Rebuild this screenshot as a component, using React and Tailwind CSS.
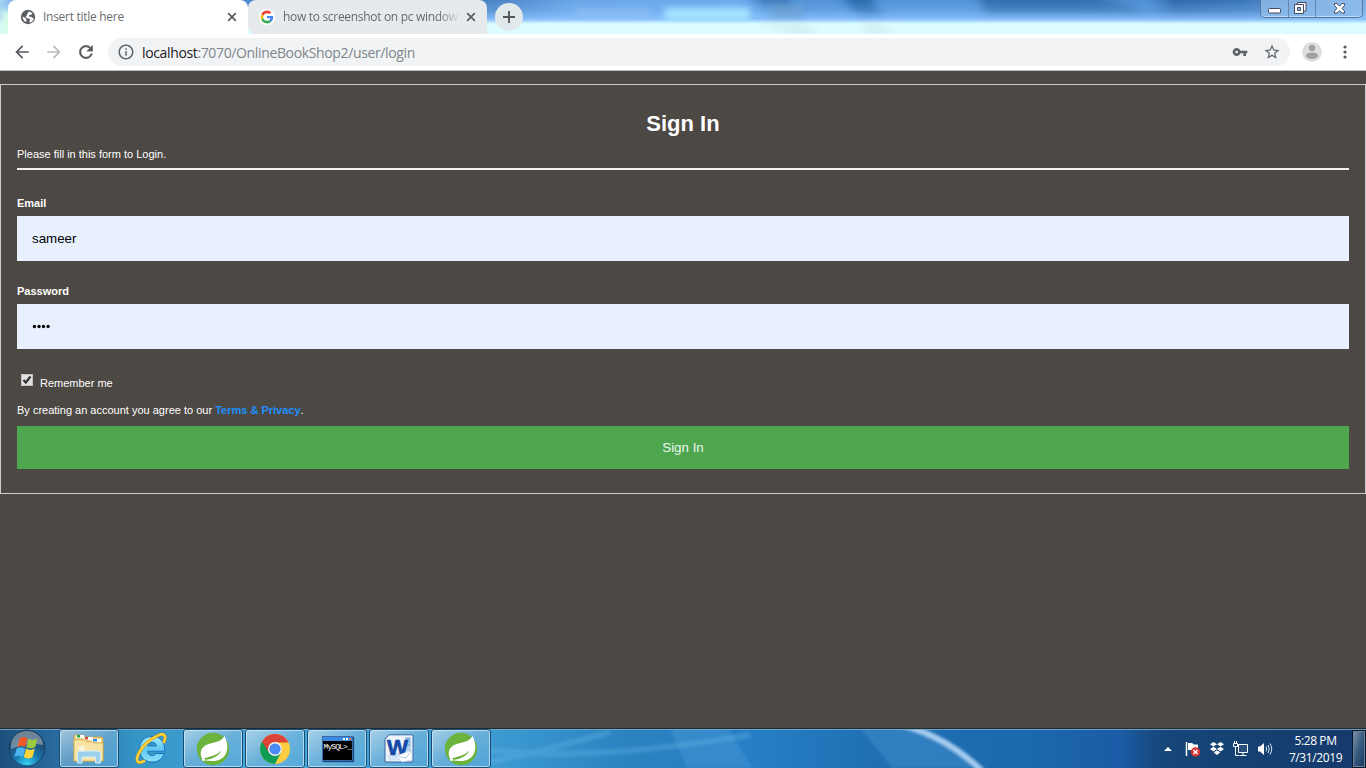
import React from "react";

function WindowGlass() {
  return (
    <svg className="absolute inset-0" width="1366" height="34" viewBox="0 0 1366 34" preserveAspectRatio="none">
      <defs>
        <linearGradient id="sky" x1="0" x2="1" y1="0" y2="0">
          <stop offset="0" stopColor="#a9d3f3" />
          <stop offset=".02" stopColor="#4f8fd8" />
          <stop offset=".36" stopColor="#4b83c4" />
          <stop offset=".42" stopColor="#6aa6e6" />
          <stop offset=".54" stopColor="#6cabf0" />
          <stop offset=".59" stopColor="#5292d6" />
          <stop offset=".68" stopColor="#5293d8" />
          <stop offset=".84" stopColor="#4f90d6" />
          <stop offset=".86" stopColor="#2f69aa" />
          <stop offset=".91" stopColor="#3a76b8" />
          <stop offset="1" stopColor="#7fb0e4" />
        </linearGradient>
        <linearGradient id="shine" x1="0" x2="0" y1="0" y2="1">
          <stop offset="0" stopColor="#8cc4ff" stopOpacity="0" />
          <stop offset=".3" stopColor="#8cc4ff" stopOpacity=".3" />
          <stop offset=".55" stopColor="#8cc4ff" stopOpacity=".85" />
          <stop offset=".7" stopColor="#dcfcff" />
          <stop offset="1" stopColor="#dcfcff" />
        </linearGradient>
        <filter id="soft" x="-20%" y="-80%" width="140%" height="260%"><feGaussianBlur stdDeviation="5" /></filter>
        <filter id="faint" x="-20%" y="-80%" width="140%" height="260%"><feGaussianBlur stdDeviation="3" /></filter>
      </defs>
      <rect width="1366" height="34" fill="url(#sky)" />
      <g filter="url(#soft)">
        <path d="M745-6h40l20 26h-20z" fill="#3c78b6" />
        <path d="M840-6h30l16 30h-24z" fill="#286cad" />
        <path d="M977-6h110l80 24h-180z" fill="#2d6cac" />
      </g>
      <rect width="1366" height="34" fill="url(#shine)" />
      <g filter="url(#faint)">
        <rect x="665" y="8" width="85" height="12" fill="#acebff" opacity=".85" />
        <rect x="575" y="9" width="75" height="8" fill="#8fbdf2" opacity=".7" />
        <rect x="768" y="5" width="34" height="12" fill="#6fa5d8" opacity=".7" />
        <rect x="0" y="10" width="24" height="24" fill="#d6fbe8" />
      </g>
      <path d="M755 23h48l18 11h-28zM860 23h18l16 11h-26z" fill="#bcd6d4" opacity=".3" filter="url(#faint)" />
    </svg>
  );
}

function Glyph({ d, size = 18, fill = "#5f6368", className = "" }) {
  return (
    <svg width={size} height={size} viewBox="0 0 24 24" fill={fill} className={"shrink-0 " + className}>
      <path d={d} />
    </svg>
  );
}

const paths = {
  back: "M20 11H7.83l5.59-5.59L12 4l-8 8 8 8 1.41-1.41L7.83 13H20v-2z",
  forward: "M12 4l-1.410 1.410L16.170 11H4v2h12.170l-5.580 5.590L12 20l8-8z",
  reload: "M17.650 6.350A7.958 7.958 0 0 0 12 4c-4.420 0-7.990 3.580-7.990 8s3.570 8 7.990 8c3.730 0 6.840-2.550 7.730-6h-2.080A5.990 5.990 0 0 1 12 18c-3.310 0-6-2.690-6-6s2.690-6 6-6c1.660 0 3.140.690 4.220 1.780L13 11h7V4l-2.350 2.350z",
  info: "M11 17h2v-6h-2v6zm1-15C6.480 2 2 6.480 2 12s4.480 10 10 10 10-4.480 10-10S17.520 2 12 2zm0 18c-4.410 0-8-3.590-8-8s3.590-8 8-8 8 3.590 8 8-3.590 8-8 8zM11 9h2V7h-2v2z",
  key: "M12.650 10C11.830 7.670 9.610 6 7 6c-3.310 0-6 2.690-6 6s2.690 6 6 6c2.610 0 4.830-1.670 5.650-4H17v4h4v-4h2v-4H12.650zM7 14c-1.100 0-2-.9-2-2s.9-2 2-2 2 .9 2 2-.9 2-2 2z",
  star: "M22 9.240l-7.190-.620L12 2 9.190 8.630 2 9.240l5.460 4.730L5.820 21 12 17.270 18.180 21l-1.630-7.030L22 9.240zM12 15.400l-3.760 2.270 1-4.280-3.320-2.880 4.380-.380L12 6.100l1.710 4.040 4.380.380-3.320 2.880 1 4.280L12 15.400z",
};

function CloseX() {
  return (
    <svg width="10" height="10" viewBox="0 0 10 10" className="shrink-0">
      <path d="M1.2 1.2l7.6 7.6M8.8 1.2L1.2 8.8" stroke="#5a5e62" strokeWidth="1.7" />
    </svg>
  );
}

function TabStrip() {
  return (
    <div className="relative h-[34px] overflow-hidden">
      <WindowGlass />
      <div className="relative flex h-full">
        <div className="flex h-full w-[487px] pl-2">
          <div className="flex w-60 items-center rounded-t-lg bg-white pl-3 pr-[11px]">
            <svg width="16" height="16" viewBox="0 0 16 16" className="shrink-0">
              <circle cx="8" cy="8" r="7.2" fill="#5a5e63" />
              <path d="M8.600 2.400c1.700.2 3 1 3.900 2.200l-1.300 1.200-2 .2-.4 1.500 2.100.3 2.800 1.700c-.3 1.600-1.200 2.900-2.600 3.700l-1.300.4-.6-1.500 1-1-.6-1.300-2.500-.6L5.500 8 7 6.600l-.3-1.400 1.200-.7z" fill="#fff" />
              <path d="M2.600 7.600l2.600 1.300 1.300 1.900-.3 2.300c-2.200-.8-3.600-2.900-3.600-5.500z" fill="#fff" />
            </svg>
            <span className="ml-[7px] grow whitespace-nowrap font-['Open_Sans',sans-serif] text-[12px] tracking-[-0.28px] text-[#6a6d70]">Insert title here</span>
            <CloseX />
          </div>
          <div className="flex grow items-center rounded-t-lg rounded-bl-lg bg-[#e7eaed] pl-[11px] pr-[11px]">
            <svg width="16" height="16" viewBox="0 0 48 48" className="shrink-0">
              <circle cx="24" cy="24" r="24" fill="#fff" />
              <g transform="translate(4.8 4.8) scale(.8)">
                <path fill="#EA4335" d="M24 9.5c3.54 0 6.71 1.22 9.21 3.6l6.85-6.85C35.9 2.38 30.47 0 24 0 14.62 0 6.51 5.38 2.56 13.22l7.98 6.19C12.43 13.72 17.74 9.5 24 9.5z" />
                <path fill="#4285F4" d="M46.98 24.55c0-1.57-.15-3.09-.38-4.55H24v9.02h12.94c-.58 2.96-2.26 5.48-4.78 7.18l7.73 6c4.51-4.18 7.09-10.36 7.09-17.65z" />
                <path fill="#FBBC05" d="M10.53 28.59A14.5 14.5 0 0 1 10.54 19.41l-7.98-6.19a24 24 0 0 0 0 21.56l7.97-6.19z" />
                <path fill="#34A853" d="M24 48c6.48 0 11.93-2.13 15.89-5.81l-7.73-6c-2.15 1.45-4.92 2.3-8.16 2.3-6.26 0-11.57-4.22-13.47-9.91l-7.98 6.19C6.51 42.62 14.62 48 24 48z" />
              </g>
            </svg>
            <span className="ml-2 whitespace-nowrap bg-gradient-to-r from-[#5f6368] from-88% to-[#d5d9dc] bg-clip-text font-['Open_Sans',sans-serif] text-[12px] tracking-[-0.31px] text-transparent">how to screenshot on pc window</span>
            <span className="grow" />
            <CloseX />
          </div>
        </div>
        <div className="ml-2 mt-[3px] flex h-7 w-7 items-center justify-center rounded-full bg-[#e1e9ec]">
          <svg width="14" height="14" viewBox="0 0 14 14"><path d="M7 1v12M1 7h12" stroke="#54585c" strokeWidth="1.9" /></svg>
        </div>
        <div className="ml-auto mr-[3px] flex h-[18px] w-[103px] rounded-b-[5px] border border-t-0 border-[#54779f] bg-[#8fbbe8]/80 shadow-[inset_0_-1px_0_0_rgba(220,240,255,0.6)]">
          <div className="flex w-7 items-center justify-center border-r border-[#6688af]">
            <svg width="13" height="6" viewBox="0 0 13 6" className="mt-1"><rect x=".5" y=".5" width="12" height="4.5" rx="1" fill="#fff" stroke="#454b63" /></svg>
          </div>
          <div className="flex w-[27px] items-center justify-center border-r border-[#6688af]">
            <svg width="13" height="13" viewBox="0 0 13 13" className="-ml-1">
              <path d="M3.5.5h8.5v8.5h-8.5z" fill="#fff" stroke="#454b63" />
              <path d="M.5 2.5h9v9h-9z" fill="#fff" stroke="#454b63" />
              <path d="M3.5 5.5h3v3h-3z" fill="#8eb8e4" stroke="#454b63" />
            </svg>
          </div>
          <div className="flex grow items-center justify-center">
            <svg width="13" height="11" viewBox="0 0 13 11" className="-mt-px">
              <path d="M1.500.6h2.800l2.200 2.600L8.700.6h2.800v1.800L9 5.300l2.500 2.900V10H8.700L6.500 7.600 4.300 10H1.500V8.200L4 5.300 1.500 2.400z" fill="#fff" stroke="#454b63" />
            </svg>
          </div>
        </div>
      </div>
    </div>
  );
}

function Toolbar() {
  return (
    <div className="flex h-[37px] items-center border-b border-[#b9bebf] bg-white">
      <div className="flex w-[108px] items-center pl-3">
        <Glyph d={paths.back} size={20} fill="#55595e" />
        <Glyph d={paths.forward} size={20} fill="#babcbe" className="ml-3" />
        <svg width="20" height="20" viewBox="0 0 24 24" className="ml-3 shrink-0" fill="#55595e" stroke="#55595e" strokeWidth=".5">
          <path d={paths.reload} />
        </svg>
      </div>
      <div className="flex h-7 w-[1182px] items-center rounded-full bg-[#f1f3f4] pl-[9px] pr-[9px]">
        <Glyph d={paths.info} size={18} />
        <span className="ml-[7px] grow whitespace-nowrap font-['Open_Sans',sans-serif] text-[14px] tracking-[-0.36px] text-[#80868b]">
          <span className="text-[#202124]">localhost</span>:7070/OnlineBookShop2/user/login
        </span>
        <Glyph d={paths.key} size={16} />
        <Glyph d={paths.star} size={18} className="ml-[15px]" />
      </div>
      <svg width="20" height="20" viewBox="0 0 20 20" className="ml-3 shrink-0">
        <circle cx="10" cy="10" r="10" fill="#dedede" />
        <circle cx="10" cy="6" r="3.2" fill="#a2a2a2" />
        <ellipse cx="10" cy="13.7" rx="6" ry="3.3" fill="#a2a2a2" />
      </svg>
      <svg width="4" height="14" viewBox="0 0 4 14" className="ml-[20.5px] shrink-0" fill="#55595e">
        <circle cx="2" cy="2" r="1.6" /><circle cx="2" cy="7" r="1.6" /><circle cx="2" cy="12" r="1.6" />
      </svg>
    </div>
  );
}

function LoginPage() {
  return (
    <main className="h-[657px] bg-[#4c4843] pt-[13px] font-['Liberation_Sans',sans-serif] text-[11px] leading-4 text-white">
      <div className="h-[410px] border border-[#ccc] px-4">
        <h1 className="pt-[25px] text-center text-[22px] font-bold leading-7">Sign In</h1>
        <p className="mt-2">Please fill in this form to Login.</p>
        <div className="mt-[6px] h-[2px] bg-[#f1f1f1]" />
        <div className="mt-[25px] font-bold">Email</div>
        <div className="mt-[5px] flex h-[45px] items-center bg-[#e8f0fe] pl-[15px] text-[13.33px] text-black">sameer</div>
        <div className="mt-[22px] font-bold">Password</div>
        <div className="mt-[5px] flex h-[45px] items-center bg-[#e8f0fe] pl-[15px]">
          <svg width="19" height="5" viewBox="0 0 19 5" fill="#000"><circle cx="2.4" cy="2.5" r="1.65" /><circle cx="7" cy="2.5" r="1.65" /><circle cx="11.5" cy="2.5" r="1.65" /><circle cx="16.1" cy="2.5" r="1.65" /></svg>
        </div>
        <div className="mt-[25px] flex h-4 pl-1">
          <svg width="12" height="12" viewBox="0 0 12 12">
            <rect x=".5" y=".5" width="11" height="11" fill="#e1e1e1" stroke="#c3c3c3" />
            <path d="M2.5 6l2.3 2.500 4.700-6" fill="none" stroke="#353535" strokeWidth="2.2" />
          </svg>
          <span className="ml-[7px] mt-[1px]">Remember me</span>
        </div>
        <p className="mt-[12px] whitespace-nowrap">By creating an account you agree to our <b className="text-[#1e90ff]">Terms &amp; Privacy</b>.</p>
        <div className="mt-[8px] flex h-[43px] items-center justify-center bg-[#4ea64f] text-[13.33px] text-[#edf6ed]">Sign In</div>
      </div>
    </main>
  );
}

function Spring() {
  return (
    <svg width="34" height="34" viewBox="0 0 34 34">
      <circle cx="17" cy="17" r="16.2" fill="#6cb33e" />
      <path d="M28.500 4C33 13 32 21 27 25.500c-5 4.500-13 4-19.500 2.500 8 0 15.500-4 18-9.500-4.500 4.500-9 5.500-14 6.800-2.500.7-4 1.400-5.500 1.200C3 21 5 14.500 12 12.200c7-2.300 13-2 16.500-8.200z" fill="#fff" />
      <circle cx="7.500" cy="27.500" r="1.500" fill="#fff" />
    </svg>
  );
}

function Folder() {
  return (
    <svg width="34" height="32" viewBox="0 0 34 32">
      <path d="M2 3l1-1h8l2 2h17l1 2v22H2z" fill="#efd37e" stroke="#c39d45" strokeWidth=".8" />
      <path d="M4 2h8v3H4z" fill="#fff" /><path d="M5 2h3v2.500H5z" fill="#1fa33c" />
      <path d="M12 4h9v3h-9z" fill="#fff" /><path d="M13 4h3v2.500h-3z" fill="#d84b33" />
      <path d="M20 6h9v3h-9z" fill="#fff" /><path d="M21 6h4v2.500h-4z" fill="#2c8be0" />
      <path d="M2 7h11l2 2h5l2 1h9v18H2z" fill="#f8e5a5" stroke="#d5ac52" strokeWidth=".8" />
      <path d="M5.500 30V20q0-2 2-2h18q3 0 3 3v9h-5v-6H10v6z" fill="#9dd0ec" stroke="#d4effb" />
      <path d="M10 12v7M6 15.500h8M7.500 13l5 5M12.500 13l-5 5" stroke="#fff" strokeWidth=".7" />
    </svg>
  );
}

function Explorer() {
  return (
    <svg width="34" height="34" viewBox="0 0 34 34">
      <defs>
        <linearGradient id="ie" x1="0" x2="0" y1="0" y2="1"><stop offset="0" stopColor="#a9ecff" /><stop offset=".5" stopColor="#5ec8f3" /><stop offset="1" stopColor="#8fe2fb" /></linearGradient>
      </defs>
      <path d="M18 4.500C10.200 4.500 5.500 10 5.500 17S10.200 30 18 30c6.300 0 10.700-3.200 12.200-8.500h-8.400c-.7 1.400-2 2.100-3.700 2.100-2.700 0-4.300-1.600-4.500-4.400h17C31.200 10.500 26.500 4.500 18 4.500zM13.700 14c.5-2.500 2-3.700 4.400-3.700s3.900 1.200 4.300 3.700z" fill="url(#ie)" stroke="#1c74c4" />
      <path d="M29.500 11C33 4 30.500.8 25 3 16 6.500 7 15 4 23c-2.800 7 .5 9.500 7 5.500" fill="none" stroke="#c98e10" strokeWidth="3.200" />
      <path d="M29.500 11C33 4 30.500.8 25 3 16 6.500 7 15 4 23c-2.800 7 .5 9.500 7 5.500" fill="none" stroke="#fbd23a" strokeWidth="2.300" />
    </svg>
  );
}

function Chrome() {
  return (
    <svg width="32" height="32" viewBox="0 0 32 32">
      <circle cx="16" cy="16" r="15" fill="#ffcd40" />
      <path d="M3.010 8.5A15 15 0 0 0 16 31l6.060-11.500L16 22.500z" fill="#0f9d58" />
      <path d="M3.010 8.5L9.940 19.500 16 9.500h13.500A15 15 0 0 0 3.010 8.500z" fill="#db4437" />
      <circle cx="16" cy="16" r="7" fill="#f1f1f1" /><circle cx="16" cy="16" r="5.6" fill="#4a8af4" />
    </svg>
  );
}

function Console() {
  return (
    <div className="flex h-[25px] w-[31px] flex-col border border-[#3b67ad] bg-black shadow-[1px_1px_1px_#174c7a]">
      <div className="flex h-1 shrink-0 items-center justify-end gap-px bg-[#3b8ae0] pr-px">
        <i className="h-[2px] w-[2px] bg-white" /><i className="h-[2px] w-[2px] bg-white" /><i className="h-[2px] w-[2px] bg-[#f1663e]" />
      </div>
      <span className="whitespace-nowrap pt-px pl-px font-['Liberation_Mono',monospace] text-[8px] leading-[10px] tracking-[-0.9px] text-white">MySQL&gt;_</span>
    </div>
  );
}

function Word() {
  return (
    <svg width="30" height="30" viewBox="0 0 30 30">
      <path d="M5 .8h22.5q1.5 0 1.500 1.500V28H1V5z" fill="#eef4fb" stroke="#36649f" />
      <path d="M21 3h6v14h-6z" fill="#b7d0ea" /><path d="M22 5h4M22 8h4M22 11h4" stroke="#5c91c8" />
      <path d="M3 21l18-4 4 8-20 2z" fill="#d4e3f3" />
      <text x="3" y="20.500" fill="#164aa8" stroke="#164aa8" strokeWidth=".7" fontFamily="Liberation Sans, sans-serif" fontWeight="700" fontSize="22" textLength="21" lengthAdjust="spacingAndGlyphs">W</text>
      <path d="M12 22l16-6v10l-10 2z" fill="#fff" stroke="#a8c3df" strokeWidth=".6" /><path d="M14 22.500l8 1.500 5-7" fill="none" stroke="#8aadd2" strokeWidth=".6" />
    </svg>
  );
}

function TaskButton({ children, plain }) {
  return (
    <div className={plain ? "flex h-[39px] w-[60px] items-center justify-center" : "flex h-[39px] w-[60px] items-center justify-center rounded-[3px] border border-[#174c75] bg-gradient-to-br from-[#c1dceb]/80 via-[#80b9dc]/60 to-[#5aabdc]/60 shadow-[inset_0_0_0_1px_rgba(205,232,247,0.75)]"}>
      {children}
    </div>
  );
}

function Taskbar() {
  return (
    <footer className="relative h-10 overflow-hidden">
      <svg className="absolute inset-0" width="1366" height="40" viewBox="0 0 1366 40">
        <defs>
          <linearGradient id="bar">
            <stop offset="0" stopColor="#1d4f7d" /><stop offset=".04" stopColor="#286a9d" /><stop offset=".1" stopColor="#3595c6" />
            <stop offset=".2" stopColor="#4ba8da" /><stop offset=".36" stopColor="#3d9bd2" /><stop offset=".46" stopColor="#2a82c0" />
            <stop offset=".55" stopColor="#267fc5" /><stop offset=".64" stopColor="#1f70b3" /><stop offset=".75" stopColor="#1b69ae" />
            <stop offset=".82" stopColor="#1b5ca7" /><stop offset=".845" stopColor="#174a80" /><stop offset=".86" stopColor="#164577" /><stop offset="1" stopColor="#15396a" />
          </linearGradient>
          <filter id="glow" x="-10%" y="-50%" width="120%" height="200%"><feGaussianBlur stdDeviation="1.6" /></filter>
        </defs>
        <rect width="1366" height="40" fill="url(#bar)" />
        <path d="M670 0h58l24 40h-65zM860 0h52q42 10 64 40H893z" fill="#5ba4df" opacity=".3" filter="url(#glow)" />
        <path d="M490 34Q540 24 610 4M490 22q100 12 260-15" fill="none" stroke="#6dbbe8" strokeWidth="6" opacity=".3" filter="url(#glow)" />
        <path d="M902-3q45 12 80 46" fill="none" stroke="#a6ccf0" strokeWidth="6" filter="url(#glow)" />
        <path d="M0 .5h1366" stroke="#1e2c36" /><path d="M0 1.5h1366" stroke="#7fabc8" opacity=".85" />
      </svg>
      <div className="relative flex h-full items-start">
        <div className="flex h-10 w-[59px] items-center pl-2">
          <svg width="38" height="38" viewBox="0 0 38 38">
            <defs><radialGradient id="orb" cx=".5" cy=".95" r=".8"><stop offset="0" stopColor="#36d4f5" /><stop offset=".45" stopColor="#1876ae" /><stop offset="1" stopColor="#223c5b" /></radialGradient></defs>
            <circle cx="19" cy="19" r="18" fill="url(#orb)" stroke="#184568" />
            <path d="M3 16a16 14 0 0 1 32 0q-15-3-32 4z" fill="#b9cbd7" opacity=".5" />
            <path d="M11.500 9.500q4-2.800 8-.3l-2.200 8.800q-4-2-8.300.3z" fill="#f05a28" /><path d="M20.500 9.800q4.500 2.400 9-.4l-2.300 8.600q-4.500 2.500-8.800.2z" fill="#9acb3c" />
            <path d="M8.700 19.500q4.200-2.300 8.400 0l-2.200 8.500q-4-2.300-8.400 0z" fill="#4eb4f0" /><path d="M18 19.600q4.300 2.500 8.800.2l-2.300 8.500q-4.400 2.300-8.700-.3z" fill="#ffd13a" />
          </svg>
        </div>
        <div className="flex gap-[2px] pt-px">
          <TaskButton><Folder /></TaskButton>
          <TaskButton plain><Explorer /></TaskButton>
          <TaskButton><Spring /></TaskButton>
          <TaskButton><Chrome /></TaskButton>
          <TaskButton><Console /></TaskButton>
          <TaskButton><Word /></TaskButton>
          <TaskButton><Spring /></TaskButton>
        </div>
        <div className="ml-auto flex h-10 items-center pt-px">
          <svg width="8" height="4" viewBox="0 0 8 4"><path d="M0 4l4-4 4 4z" fill="#fff" /></svg>
          <svg width="16" height="16" viewBox="0 0 16 16" className="ml-[13px]">
            <path d="M1.5 1v14" stroke="#fff" strokeWidth="1.5" /><path d="M3 2h4l2 1.500h4V10H8L6 9H3z" fill="#fff" />
            <circle cx="10.5" cy="11" r="4.7" fill="#d93633" /><path d="M8.5 9l4 4m0-4l-4 4" stroke="#fff" strokeWidth="1.500" />
          </svg>
          <svg width="16" height="14" viewBox="0 0 16 14" className="ml-2" fill="#fff">
            <path d="M4.5 0L8 2.300 4.500 4.600 1 2.300zM11.500 0L15 2.300l-3.500 2.300L8 2.300zM4.500 4.800L8 7.100 4.500 9.400 1 7.100zM11.500 4.800L15 7.100l-3.500 2.300L8 7.100zM8 8.300l3.300 2.200L8 13l-3.300-2.500z" />
          </svg>
          <svg width="16" height="16" viewBox="0 0 16 16" className="ml-2" fill="none" stroke="#fff">
            <path d="M5.500 3.500h9v8h-9z" fill="#2b5080" /><path d="M10 12v2M6.500 14.500h7" /><path d="M.5 2.500h4v3h-4zM1.500 0v2M3.500 0v2M2.500 6v8.500H6" />
          </svg>
          <svg width="16" height="14" viewBox="0 0 16 14" className="ml-2">
            <path d="M1 4.500h2L7 1v12L3 9.500H1z" fill="#fff" /><path d="M9 4.500q1.500 2.500 0 5M11 3q2.500 4 0 8M13 1.500q3.500 5.500 0 11" fill="none" stroke="#d9e5f1" />
          </svg>
          <div className="ml-[13px] w-[59px] whitespace-nowrap text-center font-['Open_Sans',sans-serif] text-[12px] leading-[17px] tracking-[-0.4px] text-white"><div>5:28 PM</div><div>7/31/2019</div></div>
          <div className="ml-[7px] h-[38px] w-[14px] border border-[#07182c] bg-gradient-to-br from-[#8194a9] via-[#385a7d] to-[#16375f] shadow-[inset_0_0_0_1px_#64809d]" />
        </div>
      </div>
    </footer>
  );
}

export default function App() {
  return (
    <div className="h-[768px] w-[1366px] overflow-hidden">
      <TabStrip />
      <Toolbar />
      <LoginPage />
      <Taskbar />
    </div>
  );
}
